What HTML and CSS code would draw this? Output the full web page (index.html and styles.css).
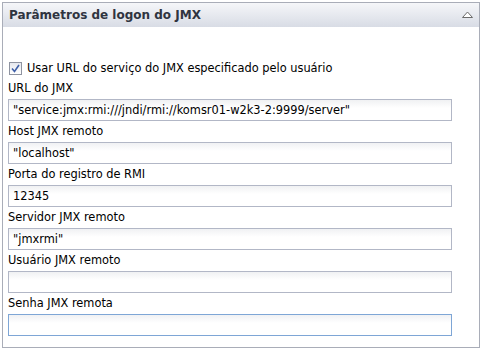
FILE: index.html
```html
<!DOCTYPE html>
<html>
<head>
<meta charset="utf-8">
<link rel="stylesheet" href="styles.css">
</head>
<body>
<div class="panel">
  <div class="panel-header">
    <span class="panel-title">Parâmetros de logon do JMX</span>
    <svg class="collapse" width="11" height="7" viewBox="0 0 11 7"><path d="M0.5 6.5 L5.5 1 L10.5 6.5 Z" fill="#fff" stroke="#6b6b6b" stroke-width="1"/></svg>
  </div>
  <div class="panel-body">
    <label class="check-row">
      <span class="checkbox"><svg width="9" height="9" viewBox="0 0 9 9"><path d="M1 4.5 L3.5 7.5 L8 1" fill="none" stroke="#3e5fa8" stroke-width="1.6"/></svg></span>
      <span>Usar URL do serviço do JMX especificado pelo usuário</span>
    </label>
    <div class="field">
      <div class="label">URL do JMX</div>
      <div class="input">"service:jmx:rmi:///jndi/rmi://komsr01-w2k3-2:9999/server"</div>
    </div>
    <div class="field">
      <div class="label">Host JMX remoto</div>
      <div class="input">"localhost"</div>
    </div>
    <div class="field">
      <div class="label">Porta do registro de RMI</div>
      <div class="input">12345</div>
    </div>
    <div class="field">
      <div class="label">Servidor JMX remoto</div>
      <div class="input">"jmxrmi"</div>
    </div>
    <div class="field">
      <div class="label">Usuário JMX remoto</div>
      <div class="input"></div>
    </div>
    <div class="field">
      <div class="label">Senha JMX remota</div>
      <div class="input focused"></div>
    </div>
  </div>
</div>
</body>
</html>
```

FILE: styles.css
```css
html, body {
  margin: 0;
  padding: 0;
  background: #fff;
}
body {
  font-family: "DejaVu Sans", Verdana, sans-serif;
  font-size: 11.4px;
  color: #000;
}
.panel {
  margin: 2px 0 0 2px;
  width: 476px;
  height: 344px;
  border: 1px solid #a9adb8;
  box-sizing: content-box;
}
.panel-header {
  height: 24px;
  background: linear-gradient(#f5f6f9, #d8dce5);
  display: flex;
  align-items: center;
  justify-content: space-between;
  padding: 0 6px 0 6px;
}
.panel-title {
  font-weight: bold;
  font-size: 12px;
  color: #2f3440;
}
.collapse {
  margin-top: -1px;
}
.panel-body {
  padding: 31px 0 0 5px;
}
.check-row {
  display: flex;
  align-items: center;
  height: 20px;
  gap: 5px;
}
.checkbox {
  width: 11px;
  height: 11px;
  border: 1px solid #8e93a0;
  background: linear-gradient(#e6e8ee, #fff);
  display: flex;
  align-items: center;
  justify-content: center;
  margin-left: 1px;
}
.label {
  height: 21px;
  line-height: 21px;
}
.input {
  border: 1px solid #b2b7c6;
  background: linear-gradient(#f0f1f3, #fff 8px);
  padding-left: 4px;
  box-sizing: border-box;
  width: 444px;
  height: 22px;
  line-height: 20px;
  white-space: nowrap;
  overflow: hidden;
}
.input.focused {
  border-color: #7ea6d6;
}
```
